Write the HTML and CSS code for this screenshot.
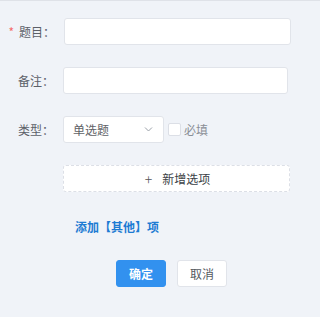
FILE: index.html
```html
<!DOCTYPE html>
<html lang="zh-CN">
<head>
  <meta charset="UTF-8">
  <title>题目</title>
  <link rel="stylesheet" href="styles.css">
</head>
<body>
  <div class="panel">
    <div class="fila">
      <label class="etiqueta obligatorio">题目：</label>
      <input class="campo campo-titulo" type="text">
    </div>
    <div class="fila">
      <label class="etiqueta etiqueta-nota">备注：</label>
      <input class="campo campo-nota" type="text">
    </div>
    <div class="fila">
      <label class="etiqueta etiqueta-nota">类型：</label>
      <div class="selector">
        <span>单选题</span>
        <svg width="9" height="5" viewBox="0 0 9 5"><path d="M1 .5l3.5 3.5 3.5-3.5" fill="none" stroke="#9aa0a8" stroke-width="1"/></svg>
      </div>
      <span class="casilla"></span>
      <span class="requerido">必填</span>
    </div>
    <div class="nueva-opcion">
      <span class="mas">+</span>新增选项
    </div>
    <a class="otro">添加【其他】项</a>
    <div class="botones">
      <button class="boton boton-ok">确定</button>
      <button class="boton">取消</button>
    </div>
  </div>
</body>
</html>
```

FILE: styles.css
```css
/* --- Estilos Generales --- */
body {
  margin: 0;
  background: #f0f3f8;
  font-family: "Noto Sans CJK SC", "Noto Sans", sans-serif;
  font-size: 12px;
  color: #5c6068;
}

.panel {
  border-top: 1px solid #dfe2e8;
  height: 316px;
  padding-top: 17px;
  box-sizing: border-box;
}

.fila {
  display: flex;
  align-items: center;
  height: 27px;
  margin-bottom: 22px;
}

.etiqueta {
  width: 55px;
  margin-right: 9px;
  text-align: right;
  line-height: 27px;
}
.etiqueta-nota {
  width: 54px;
}
.obligatorio::before {
  content: "*";
  color: #f56c6c;
  margin-right: 5px;
}

.campo {
  height: 27px;
  box-sizing: border-box;
  border: 1px solid #e1e4ea;
  border-radius: 3px;
  background: #fff;
  outline: none;
}
.campo-titulo { width: 227px; }
.campo-nota { width: 225px; }

.selector {
  width: 101px;
  height: 27px;
  box-sizing: border-box;
  border: 1px solid #e1e4ea;
  border-radius: 3px;
  background: #fff;
  display: flex;
  align-items: center;
  justify-content: space-between;
  padding: 0 10px 0 9px;
  color: #606266;
}

.casilla {
  width: 13px;
  height: 13px;
  box-sizing: border-box;
  border: 1px solid #dcdfe6;
  border-radius: 2px;
  background: #fff;
  margin-left: 4px;
}
.requerido {
  margin-left: 3px;
  color: #8a8e96;
}

.nueva-opcion {
  margin-left: 63px;
  width: 227px;
  height: 27px;
  box-sizing: border-box;
  border: 1px dashed #dcdfe6;
  border-radius: 3px;
  background: #fff;
  display: flex;
  align-items: center;
  justify-content: center;
  color: #3b3f46;
}
.mas {
  font-size: 14px;
  font-weight: 300;
  margin: 0 10px 0 2px;
  color: #555;
}

.otro {
  display: block;
  margin: 26px 0 0 75px;
  color: #1c7bd3;
  font-weight: bold;
  line-height: 17px;
}

.botones {
  display: flex;
  gap: 11px;
  margin: 25px 0 0 116px;
}
.boton {
  width: 50px;
  height: 27px;
  border: 1px solid #e1e4ea;
  border-radius: 3px;
  background: #fff;
  font-family: inherit;
  font-size: 12px;
  color: #55595f;
  padding: 0;
}
.boton-ok {
  background: #3291ef;
  border-color: #3291ef;
  color: #fff;
  font-weight: bold;
}
```
